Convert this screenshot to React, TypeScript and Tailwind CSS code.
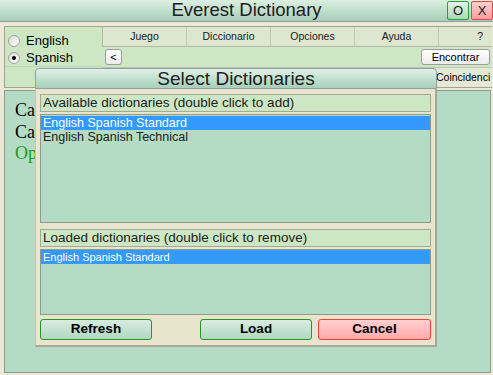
import React from "react";

function Radio({ checked, label }: { checked?: boolean; label: string }) {
  return (
    <div className="flex items-center gap-[6px] h-[17px]">
      <div className="w-[12px] h-[12px] rounded-full border border-[#9aa49a] bg-gradient-to-br from-[#dcdcd4] to-white flex items-center justify-center">
        {checked && <div className="w-[4px] h-[4px] rounded-full bg-black" />}
      </div>
      <span className="text-[13px] text-black leading-none">{label}</span>
    </div>
  );
}

export default function App() {
  const menu = ["Juego", "Diccionario", "Opciones", "Ayuda"];
  return (
    <div className="w-[493px] h-[375px] bg-[#ece9d8] relative overflow-hidden font-['Liberation_Sans',sans-serif] text-black">
      {/* Title bar */}
      <div className="h-[22px] grid grid-cols-[47px_1fr_47px] items-center bg-gradient-to-b from-[#dcefe2] to-[#a8cfb9] border-b border-[#8e9ea4]">
        <div />
        <div className="text-center text-[18.5px] leading-none text-[#202020]">Everest Dictionary</div>
        <div className="flex gap-[2px] justify-end h-full pt-[1px] pb-[1px]">
          <div className="w-[22px] h-[19px] rounded-[2px] border border-[#2e9a3a] bg-gradient-to-b from-[#e6f5e8] to-[#a8d8b0] flex items-center justify-center text-[13px] text-[#202020]">O</div>
          <div className="w-[22px] h-[19px] rounded-[2px] border border-[#e04848] bg-gradient-to-b from-[#ffd0d0] to-[#ff9c9c] flex items-center justify-center text-[13px] text-[#202020]">X</div>
        </div>
      </div>

      {/* Body */}
      <div className="px-[4px] pt-[4px] pr-[1px]">
        {/* Top panel */}
        <div className="flex h-[62px] border border-[#a4a48c] border-r-0">
          <div className="w-[97px] bg-[#cde7c5] flex flex-col">
            <div className="flex flex-col pl-[3px] pt-[5px] h-[40px] border-b border-[#b8d4b0]">
              <Radio label="English" />
              <Radio checked label="Spanish" />
            </div>
            <div className="flex-1" />
          </div>
          <div className="flex-1 flex flex-col">
            <div className="h-[20px] flex bg-[#dde6cf] border-b border-l border-[#b4b8a4] text-[10.5px] text-[#202020]">
              {menu.map((m) => (
                <div key={m} className="w-[84px] border-r border-[#c4c8b4] flex items-center justify-center">{m}</div>
              ))}
              <div className="flex-1 flex items-center justify-end pr-[9px]">?</div>
            </div>
            <div className="h-[20px] bg-[#cde7c5] flex items-center justify-between pl-[3px] pr-[2px]">
              <div className="w-[17px] h-[16px] rounded-[3px] border border-[#9c9c9c] bg-gradient-to-b from-white to-[#ececec] flex items-center justify-center text-[11px] leading-none">&lt;</div>
              <div className="w-[69px] h-[16px] rounded-[3px] border border-[#9c9c9c] bg-gradient-to-b from-white to-[#ececec] flex items-center justify-center text-[11px] leading-none">Encontrar</div>
            </div>
            <div className="flex-1 bg-[#cde7c5] flex justify-end border-t border-[#b8c8a8]">
              <div className="w-[59px] h-full bg-[#e4e8d6] border-l border-[#b0b4a0] flex items-center pl-[2px] text-[10.5px] overflow-hidden whitespace-nowrap">Coincidenci</div>
            </div>
          </div>
        </div>

        {/* Main area */}
        <div className="mt-[2px] h-[283px] mr-[1px] bg-[#b4dcc4] border border-[#8c9a90] pl-[10px] pt-[9px] font-['Liberation_Serif',serif] text-[18px] leading-[21.5px]">
          <div>Ca</div>
          <div>Ca</div>
          <div className="text-[#1a9a1a]">Op</div>
        </div>
      </div>

      {/* Dialog */}
      <div className="absolute left-[35px] top-[68px] w-[402px] flex flex-col">
        <div className="h-[21px] rounded-t-[4px] border border-[#8ea0a8] bg-gradient-to-b from-[#e0f1e6] to-[#a6cfb9] flex items-center justify-center text-[19px] leading-none text-[#202020]">
          Select Dictionaries
        </div>
        <div className="bg-[#e8e5cc] border-l border-r-2 border-b-2 border-l-[#c8c4b0] border-r-[#a8a898] border-b-[#a8a898] px-[4px] pt-[5px] pb-[5px] text-[12.5px]">
          <div className="h-[18px] bg-[#cde7c5] border border-[#a4a894] flex items-center pl-[2px] text-[13.5px] text-[#202020]">
            Available dictionaries (double click to add)
          </div>
          <div className="mt-[2px] h-[109px] bg-[#b4dcc4] border border-[#8c9a90] pt-[1px]">
            <div className="h-[14px] bg-[#3399ff] text-white pl-[2px] leading-[14px]">English Spanish Standard</div>
            <div className="h-[14px] text-[#202020] pl-[2px] leading-[14px]">English Spanish Technical</div>
          </div>
          <div className="mt-[6px] h-[18px] bg-[#cde7c5] border border-[#a4a894] flex items-center pl-[2px] text-[13.5px] text-[#202020]">
            Loaded dictionaries (double click to remove)
          </div>
          <div className="mt-[2px] h-[66px] bg-[#b4dcc4] border border-[#8c9a90]">
            <div className="h-[14px] bg-[#3399ff] text-white pl-[1px] leading-[12px] border border-dotted border-[#c08040] text-[11px]">English Spanish Standard</div>
          </div>
          <div className="mt-[4px] flex justify-between h-[21px] text-[13.5px] font-bold">
            <div className="w-[112px] rounded-[3px] border border-[#28962a] bg-gradient-to-b from-[#d8ece0] to-[#b0d8c0] flex items-center justify-center">Refresh</div>
            <div className="flex gap-[6px]">
              <div className="w-[112px] rounded-[3px] border border-[#28962a] bg-gradient-to-b from-[#d8ece0] to-[#b0d8c0] flex items-center justify-center">Load</div>
              <div className="w-[113px] rounded-[3px] border border-[#f03c3c] bg-gradient-to-b from-[#ffd0d0] to-[#ffaaaa] flex items-center justify-center">Cancel</div>
            </div>
          </div>
        </div>
      </div>
    </div>
  );
}
